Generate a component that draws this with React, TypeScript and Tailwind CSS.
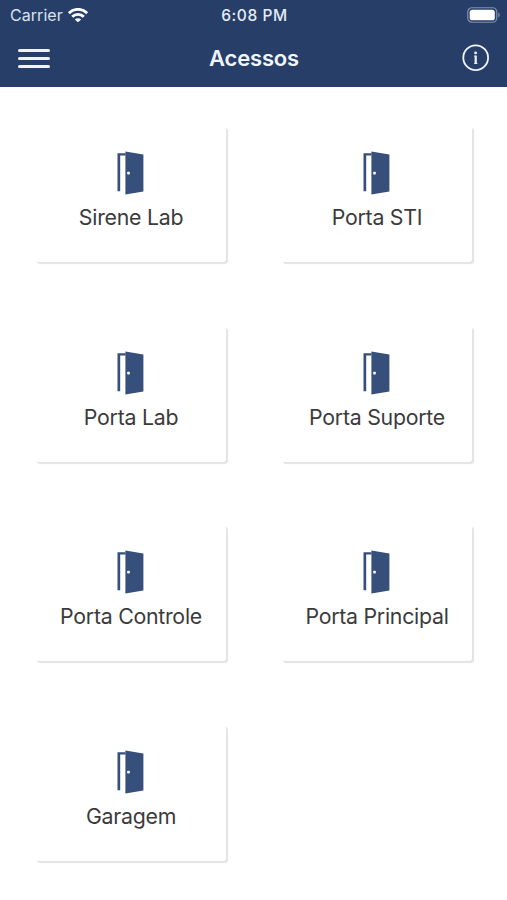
const ACCESSES = [
  'Sirene Lab',
  'Porta STI',
  'Porta Lab',
  'Porta Suporte',
  'Porta Controle',
  'Porta Principal',
  'Garagem',
]

function WifiIcon() {
  return (
    <svg className="w-5 h-[15px]" viewBox="0 0 20 15" fill="none" stroke="white" strokeWidth="2.9">
      <path d="M0.9 5.1C6 0.1 14 0.1 19.1 5.1" />
      <path d="M4.2 8.8C7.5 5.6 12.5 5.6 15.8 8.8" />
      <path d="M10 14.3L6.9 11.5C8.6 9.9 11.4 9.9 13.1 11.5Z" fill="white" stroke="none" />
    </svg>
  )
}

function BatteryIcon() {
  return (
    <svg className="w-[34px] h-4" viewBox="0 0 34 16">
      <rect x="0.75" y="0.75" width="29" height="14.5" rx="4.2" fill="none" stroke="#8290ad" strokeWidth="1.2" />
      <rect x="2.7" y="2.7" width="25.1" height="10.6" rx="2.6" fill="white" />
      <path d="M31.3 5.6C33.2 6.3 33.2 9.7 31.3 10.4Z" fill="#8290ad" />
    </svg>
  )
}

function InfoIcon() {
  return (
    <svg className="w-7 h-7" viewBox="0 0 28 28" fill="none" stroke="#f0f4fb">
      <circle cx="13.7" cy="13.7" r="12.4" strokeWidth="1.8" />
      <circle cx="13.6" cy="8.9" r="1.4" fill="#f0f4fb" stroke="none" />
      <path d="M13.7 11.6V20" strokeWidth="2.2" />
      <path d="M12 12.1H14M12.2 19.5H15.4" strokeWidth="0.8" />
    </svg>
  )
}

function DoorIcon() {
  return (
    <svg className="w-[27px] h-11" viewBox="0 0 27 44" fill="#374f7b">
      <path d="M0.5 2.3H8.5V4.6H3.2V40.3H0.5Z" />
      <path d="M8.4 0.5L26.4 3.5V40.5L8.4 43.5Z" />
      <rect x="10.2" y="20.7" width="2.6" height="2.7" rx="0.6" fill="white" />
    </svg>
  )
}

function AccessCard({ name }: { name: string }) {
  return (
    <button className="flex flex-col items-center h-[135px] pt-6 rounded-[3px] bg-white shadow-[1.5px_1.5px_1px_#e3e4e6]">
      <span className="pr-0.5">
        <DoorIcon />
      </span>
      <span className="mt-2 text-[21.3px] leading-7 tracking-[-0.26px] whitespace-nowrap text-[#3b3b3b]">{name}</span>
    </button>
  )
}

export default function App() {
  return (
    <div className="h-[900px] overflow-hidden bg-white font-['Inter',sans-serif]">
      <header className="h-[87px] bg-[#273f68] text-white">
        <div className="grid grid-cols-3 items-center h-[30px] pl-2.5 pr-2">
          <div className="flex items-center gap-[5px] text-[16px] text-[#d9e2f1]">
            <span className="tracking-[0.05px]">Carrier</span>
            <WifiIcon />
          </div>
          <span className="pt-px text-center text-[15.5px] font-medium tracking-[0.6px] text-[#e6ecf6]">6:08 PM</span>
          <div className="-mr-0.5 flex justify-end">
            <BatteryIcon />
          </div>
        </div>
        <div className="grid grid-cols-3 items-center h-14 pl-[18px] pr-[17px]">
          <button className="flex flex-col gap-[5px] w-8">
            <span className="h-[3px] rounded-full bg-[#f0f4fa]" />
            <span className="h-[3px] rounded-full bg-[#f0f4fa]" />
            <span className="h-[3px] rounded-full bg-[#f0f4fa]" />
          </button>
          <h1 className="text-center text-[22px] font-semibold tracking-[-0.2px] text-[#f0f4fb]">Acessos</h1>
          <button className="flex justify-end">
            <InfoIcon />
          </button>
        </div>
      </header>
      <main className="grid grid-cols-2 gap-x-14 gap-y-[64.5px] pt-10 pl-9 pr-[35px]">
        {ACCESSES.map((name) => (
          <AccessCard key={name} name={name} />
        ))}
      </main>
    </div>
  )
}
